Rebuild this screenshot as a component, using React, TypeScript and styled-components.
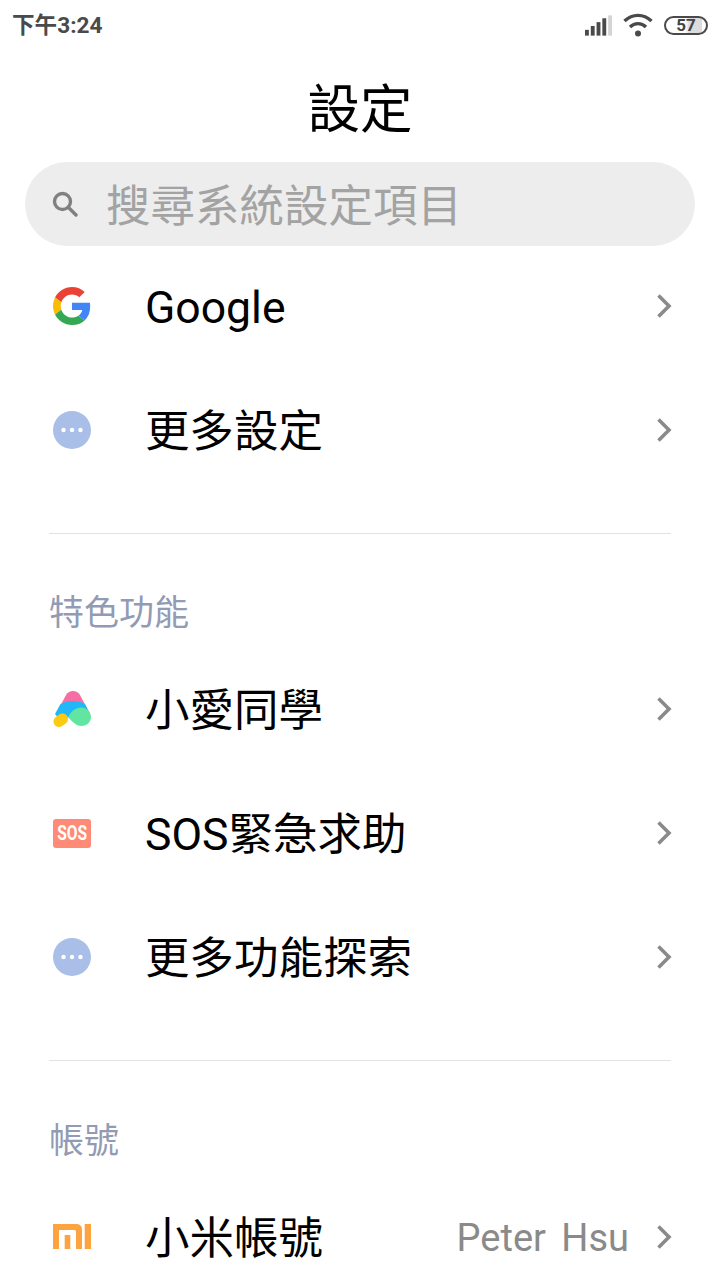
import React from 'react'
import styled, { createGlobalStyle } from 'styled-components'

const GlobalStyle = createGlobalStyle`
  html, body {
    margin: 0;
    padding: 0;
    background: #fff;
  }
  body {
    font-family: Roboto, "Noto Sans CJK TC", sans-serif;
  }
`

const Page = styled.div`
  width: 720px;
  height: 1280px;
  overflow: hidden;
  background: #fff;
  display: flex;
  flex-direction: column;
`

const StatusBar = styled.div`
  height: 50px;
  padding: 0 12px 0 12px;
  display: flex;
  align-items: center;
  justify-content: space-between;
  color: #4a4a4a;
  flex-shrink: 0;
`

const Clock = styled.div`
  font-size: 22.6px;
  font-weight: 700;
  line-height: 50px;
  padding-top: 1px;
`

const StatusIcons = styled.div`
  display: flex;
  align-items: center;
  gap: 11px;
`

const Battery = styled.div`
  width: 44px;
  height: 19px;
  box-sizing: border-box;
  border: 2.5px solid #4a4a4a;
  border-radius: 10px;
  background: linear-gradient(90deg, #fff 48%, #dcdcdc 58%, #dcdcdc 90%, #fff 90%);
  display: flex;
  align-items: center;
  justify-content: center;
  font-size: 17px;
  font-weight: 700;
  color: #444;
  line-height: 14px;
`

const Title = styled.h1`
  margin: 0;
  height: 112px;
  flex-shrink: 0;
  display: flex;
  align-items: center;
  justify-content: center;
  font-size: 52.5px;
  font-weight: 400;
  color: #000;
  padding-bottom: 2px;
  box-sizing: border-box;
`

const SearchBar = styled.div`
  margin: 0 25px;
  height: 84px;
  flex-shrink: 0;
  border-radius: 42px;
  background: #ededed;
  display: flex;
  align-items: center;
  padding-left: 27px;
  gap: 28px;
`

const SearchText = styled.span`
  font-size: 44.5px;
  color: #a3a3a3;
  line-height: 84px;
  padding-top: 6px;
`

const Rows = styled.div`
  display: flex;
  flex-direction: column;
  gap: 4px;
`

const Row = styled.div`
  height: 120px;
  flex-shrink: 0;
  display: flex;
  align-items: center;
  padding: 0 48px 0 53px;
`

const IconSlot = styled.div`
  width: 92px;
  flex-shrink: 0;
  display: flex;
  align-items: center;
`

const Label = styled.span<{ $lift?: number }>`
  font-size: 44.5px;
  color: #000;
  flex: 1;
  white-space: nowrap;
  margin-bottom: ${(p) => p.$lift ?? 6}px;
`

const Value = styled.span`
  font-size: 38px;
  color: #8a8a8a;
  word-spacing: 6px;
  margin-right: 27px;
  white-space: nowrap;
  margin-top: 2px;
`

const Divider = styled.div<{ $top: number }>`
  height: 1px;
  margin: ${(p) => p.$top}px 49px 0;
  background: #e3e3e3;
  flex-shrink: 0;
`

const SectionTitle = styled.div<{ $height: number; $drop: number }>`
  height: ${(p) => p.$height}px;
  padding: ${(p) => p.$drop}px 0 0 49px;
  box-sizing: border-box;
  font-size: 35px;
  line-height: 50px;
  color: #929bb3;
  flex-shrink: 0;
`

const Chevron = () => (
  <svg width="16" height="26" viewBox="0 0 16 26" fill="none">
    <path d="M2.5 2.5 L13 13 L2.5 23.5" stroke="#8a8a8a" strokeWidth="3.6" />
  </svg>
)

const SignalIcon = () => (
  <svg width="27" height="21" viewBox="0 0 28 21">
    <rect x="0" y="15" width="4" height="6" fill="#4a4a4a" />
    <rect x="6" y="11" width="4" height="10" fill="#4a4a4a" />
    <rect x="12" y="7" width="4" height="14" fill="#4a4a4a" />
    <rect x="18" y="3" width="4" height="18" fill="#4a4a4a" />
    <rect x="24" y="0" width="4" height="21" fill="#d4d4d4" />
  </svg>
)

const WifiIcon = () => (
  <svg width="30" height="24" viewBox="0 0 30 24" fill="none">
    <path d="M1.5 8 C9.5 0.5 20.5 0.5 28.5 8" stroke="#4a4a4a" strokeWidth="3.4" />
    <path d="M7 14 C11.5 9.5 18.5 9.5 23 14" stroke="#4a4a4a" strokeWidth="3.4" />
    <circle cx="15" cy="20.5" r="3" fill="#4a4a4a" />
  </svg>
)

const SearchIcon = () => (
  <svg width="26" height="26" viewBox="0 0 26 26" fill="none">
    <circle cx="10.5" cy="10.5" r="8" stroke="#808080" strokeWidth="3.4" />
    <path d="M16.5 16.5 L24 24" stroke="#808080" strokeWidth="3.4" strokeLinecap="round" />
  </svg>
)

const GoogleIcon = () => (
  <svg width="38" height="38" viewBox="0 0 48 48">
    <path fill="#EA4335" d="M24 9.5c3.54 0 6.71 1.22 9.21 3.6l6.85-6.85C35.9 2.38 30.47 0 24 0 14.62 0 6.51 5.38 2.56 13.22l7.98 6.19C12.43 13.72 17.74 9.5 24 9.5z" />
    <path fill="#4285F4" d="M46.98 24.55c0-1.57-.15-3.09-.38-4.55H24v9.02h12.94c-.58 2.96-2.26 5.48-4.78 7.18l7.73 6c4.51-4.18 7.09-10.36 7.09-17.65z" />
    <path fill="#FBBC05" d="M10.53 28.59c-.48-1.45-.76-2.99-.76-4.59s.27-3.14.76-4.59l-7.98-6.19C.92 16.46 0 20.12 0 24c0 3.88.92 7.54 2.56 10.78l7.97-6.19z" />
    <path fill="#34A853" d="M24 48c6.48 0 11.93-2.13 15.89-5.81l-7.73-6c-2.15 1.45-4.92 2.3-8.16 2.3-6.26 0-11.57-4.22-13.47-9.91l-7.98 6.19C6.51 42.62 14.62 48 24 48z" />
  </svg>
)

const MoreIcon = () => (
  <svg width="38" height="38" viewBox="0 0 38 38">
    <circle cx="19" cy="19" r="19" fill="#a9bfe8" />
    <circle cx="10.5" cy="19" r="2.2" fill="#fff" />
    <circle cx="19" cy="19" r="2.2" fill="#fff" />
    <circle cx="27.5" cy="19" r="2.2" fill="#fff" />
  </svg>
)

const AiIcon = () => (
  <svg width="40" height="38" viewBox="1 0 40 38">
    <path d="M14 5 C17 -0.5 25 -0.5 28 5 L37 22 L5 22 Z" fill="#f56fa5" />
    <path d="M3 24 L8.5 14 C15 10 27 10 33 14 L38 24 L30 30 L16 27 L9 31 Z" fill="#22b8f8" />
    <path d="M16 27.5 C19 21 24 17.5 29 17.5 C35 17.5 39 22 39 27 C39 32 35 36 29 36 C24 36 20 31 16 27.5 Z" fill="#62e5a0" />
    <path d="M7 31.5 L10.5 29" stroke="#fdca12" strokeWidth="11" strokeLinecap="round" />
  </svg>
)

const SosBadge = styled.div`
  width: 38px;
  height: 29px;
  border-radius: 3px;
  background: #ff8a75;
  color: #fff;
  display: flex;
  align-items: center;
  justify-content: center;
`

const SosText = styled.span`
  display: inline-block;
  font-size: 20px;
  font-weight: 700;
  transform: scaleX(0.78);
`

const MiSvg = styled.svg`
  margin-bottom: 2px;
`

const MiIcon = () => (
  <MiSvg width="38" height="25" viewBox="0 0 38 25" fill="#fda33f">
    <path d="M0 0 H23 C27 0 29 2 29 6 V25 H23 V8 C23 6.5 22.5 6 21 6 H6 V25 H0 Z" />
    <rect x="11.7" y="11" width="5.6" height="14" />
    <rect x="31.7" y="0" width="6.3" height="25" />
  </MiSvg>
)

const items = {
  top: [
    { icon: <GoogleIcon />, label: 'Google', lift: -4 },
    { icon: <MoreIcon />, label: '更多設定' },
  ],
  features: [
    { icon: <AiIcon />, label: '小愛同學' },
    {
      icon: (
        <SosBadge>
          <SosText>SOS</SosText>
        </SosBadge>
      ),
      label: 'SOS緊急求助',
    },
    { icon: <MoreIcon />, label: '更多功能探索' },
  ],
}

const App = () => {
  return (
    <Page>
      <GlobalStyle />
      <StatusBar>
        <Clock>下午3:24</Clock>
        <StatusIcons>
          <SignalIcon />
          <WifiIcon />
          <Battery>57</Battery>
        </StatusIcons>
      </StatusBar>
      <Title>設定</Title>
      <SearchBar>
        <SearchIcon />
        <SearchText>搜尋系統設定項目</SearchText>
      </SearchBar>
      <Rows>
        {items.top.map((item) => (
          <Row key={item.label}>
            <IconSlot>{item.icon}</IconSlot>
            <Label $lift={item.lift}>{item.label}</Label>
            <Chevron />
          </Row>
        ))}
      </Rows>
      <Divider $top={43} />
      <SectionTitle $height={115} $drop={55}>特色功能</SectionTitle>
      <Rows>
        {items.features.map((item) => (
          <Row key={item.label}>
            <IconSlot>{item.icon}</IconSlot>
            <Label>{item.label}</Label>
            <Chevron />
          </Row>
        ))}
      </Rows>
      <Divider $top={43} />
      <SectionTitle $height={116} $drop={56}>帳號</SectionTitle>
      <Row>
        <IconSlot>
          <MiIcon />
        </IconSlot>
        <Label>小米帳號</Label>
        <Value>Peter Hsu</Value>
        <Chevron />
      </Row>
    </Page>
  )
}

export default App
